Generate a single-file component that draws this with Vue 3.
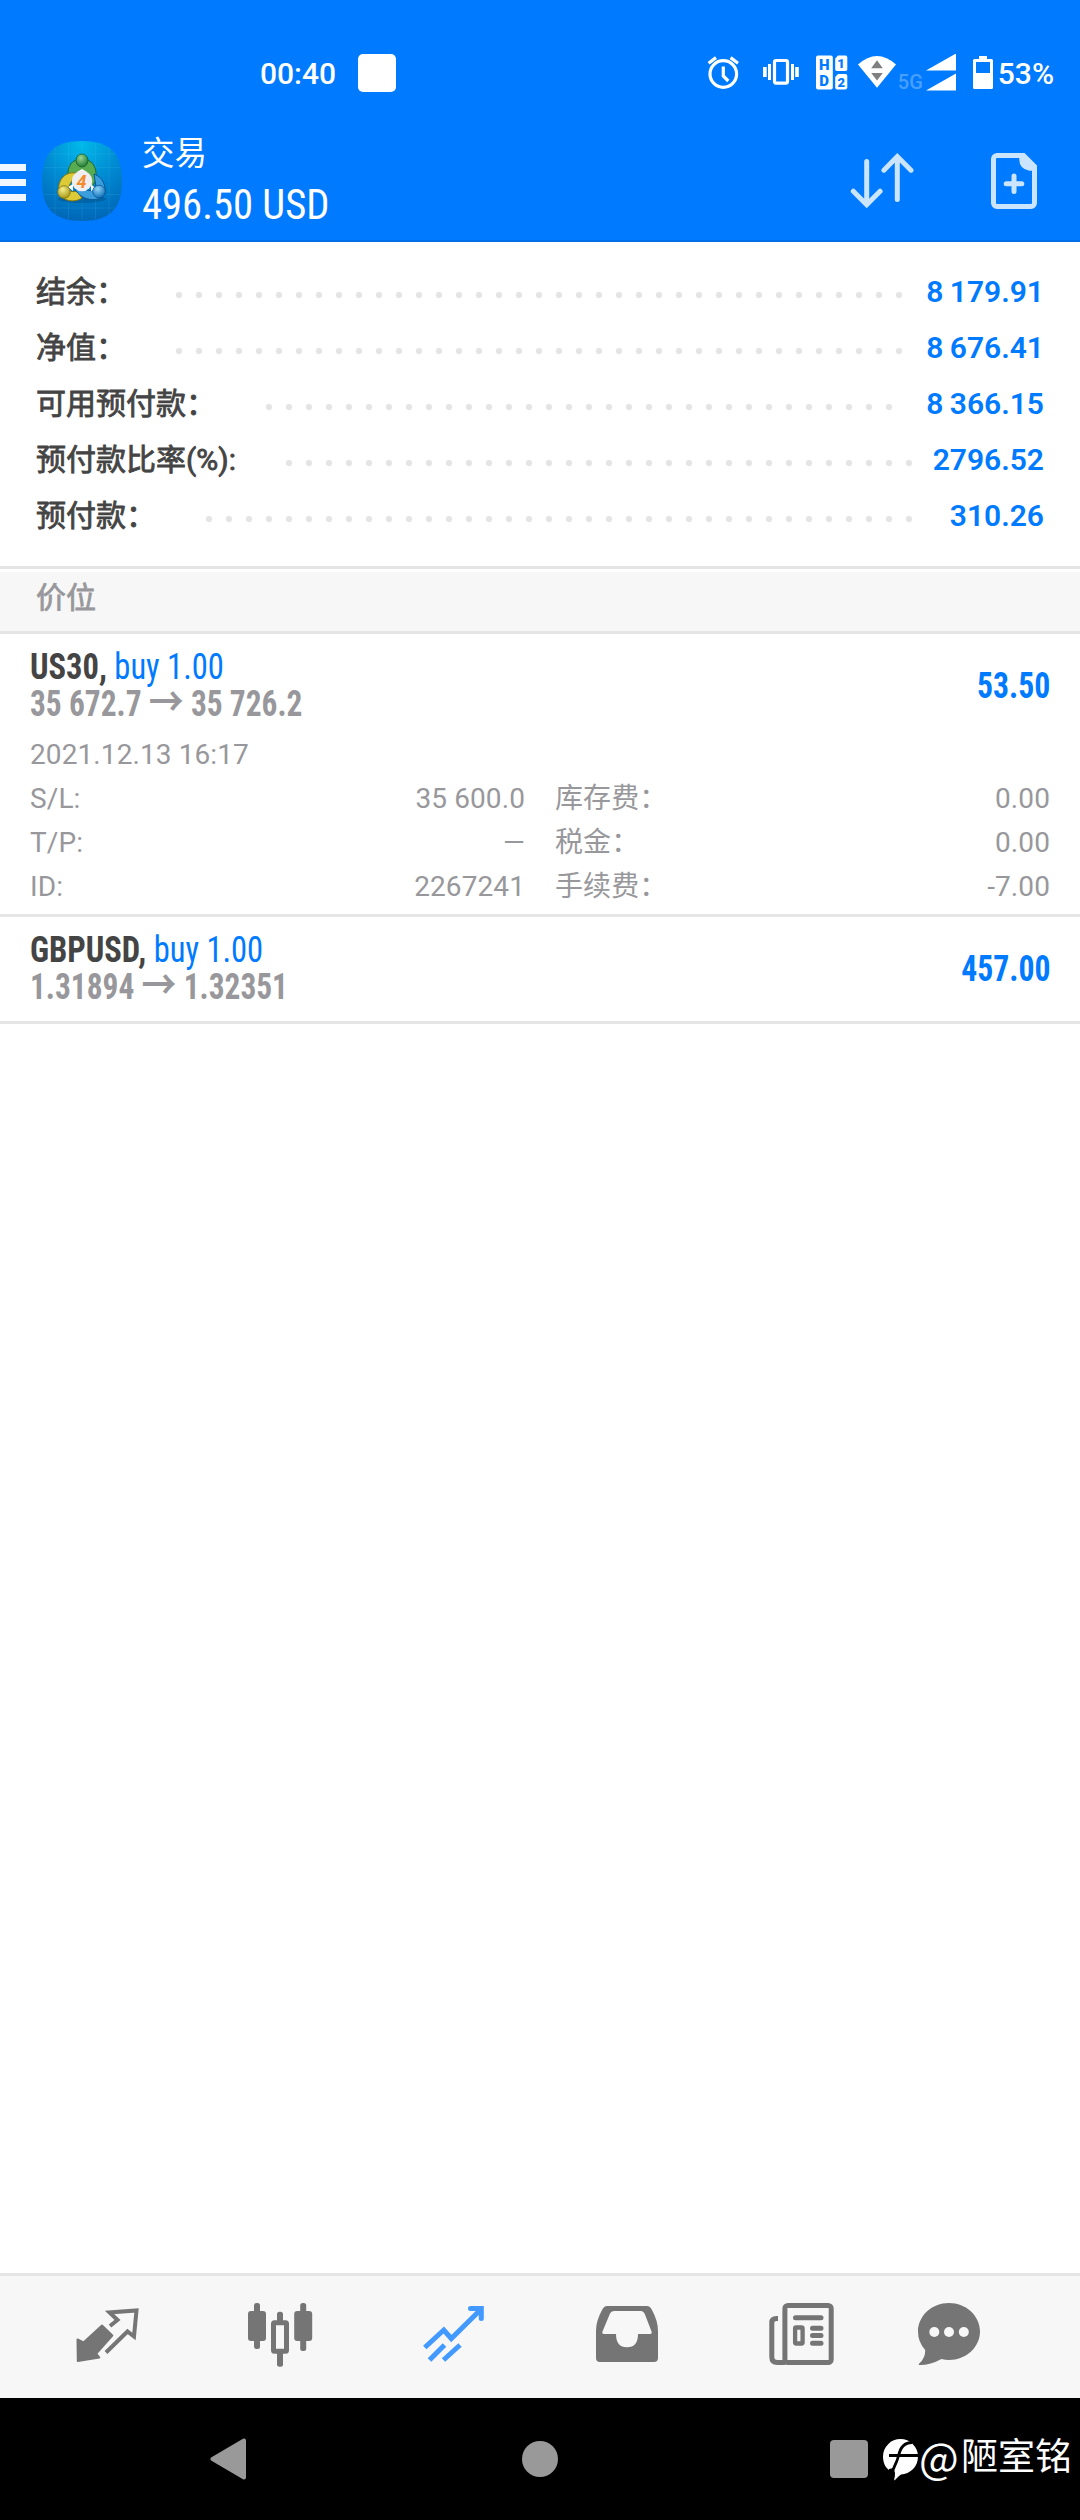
<script setup>
const summary = [
  { label: '结余：', value: '8 179.91', dots: 37 },
  { label: '净值：', value: '8 676.41', dots: 37 },
  { label: '可用预付款：', value: '8 366.15', dots: 32 },
  { label: '预付款比率(%):', value: '2796.52', dots: 32 },
  { label: '预付款：', value: '310.26', dots: 36 }
]

const positions = [
  {
    symbol: 'US30',
    side: 'buy 1.00',
    open: '35 672.7',
    current: '35 726.2',
    profit: '53.50',
    time: '2021.12.13 16:17',
    details: [
      ['S/L:', '35 600.0', '库存费：', '0.00'],
      ['T/P:', '—', '税金：', '0.00'],
      ['ID:', '2267241', '手续费：', '-7.00']
    ]
  },
  {
    symbol: 'GBPUSD',
    side: 'buy 1.00',
    open: '1.31894',
    current: '1.32351',
    profit: '457.00'
  }
]
</script>

<template>
  <div class="screen">
    <header class="header">
      <div class="status">
        <span class="clock">00:40</span>
        <span class="notice"></span>
        <div class="status-icons">
          <svg class="alarm" width="34" height="40" viewBox="706 54 34 40" fill="none" stroke="#fff" stroke-width="3.2">
            <circle cx="723.3" cy="74" r="13.3" />
            <path d="M723.3 66.5V76l5 5M708.6 63.2l7.4-5.6M738 63.2l-7.4-5.6" />
          </svg>
          <svg class="vibrate" width="36" height="40" viewBox="763 54 36 40" fill="#fff">
            <rect x="774.5" y="60.5" width="13" height="22.6" rx="1.5" fill="none" stroke="#fff" stroke-width="3.2" />
            <path d="M763 67h3.7v10H763zM768 64h3v16h-3zM791 64h3v16h-3zM795.2 67h3.6v10h-3.6z" />
          </svg>
          <svg class="hd" width="32" height="40" viewBox="816 54 32 40" fill="#fff">
            <rect x="816" y="55.6" width="16.8" height="33.8" rx="2" />
            <path d="M838 55.6h7.5a1.8 1.8 0 0 1 1.8 1.8v11.8a1.8 1.8 0 0 1-1.8 1.8h-8.5a1.8 1.8 0 0 1-1.8-1.8V58.5z" />
            <path d="M838 74h7.5a1.8 1.8 0 0 1 1.8 1.8v11.8a1.8 1.8 0 0 1-1.8 1.8h-8.5a1.8 1.8 0 0 1-1.8-1.8V77z" />
            <text class="hd-text" x="824.2" y="69.8" font-size="15">H</text>
            <text class="hd-text" x="824.2" y="86.3" font-size="15">D</text>
            <text class="hd-text" x="841" y="68" font-size="13">1</text>
            <text class="hd-text" x="841.2" y="86.5" font-size="13">2</text>
          </svg>
          <svg class="wifi" width="40" height="40" viewBox="857 54 40 40">
            <path d="M858 64.5Q877 47.5 896 64.5L877 87.8z" fill="#fff" />
            <path d="M877 60.3l5.8 8h-11.6zM877 80.5l5.8-7.5h-11.6z" fill="#808080" />
          </svg>
          <span class="network">5G</span>
          <svg class="signal" width="30" height="40" viewBox="926 54 30 40" fill="#fff">
            <path d="M926 70.4L956 53.5v16.9zM926 90.5l30-16.9v16.9z" />
          </svg>
          <svg class="battery" width="20" height="40" viewBox="973 54 20 40">
            <path fill="#fff" fill-rule="evenodd" d="M979 56h8v3h4.5a1.5 1.5 0 0 1 1.5 1.5v27a1.5 1.5 0 0 1-1.5 1.5h-17a1.5 1.5 0 0 1-1.5-1.5v-27a1.5 1.5 0 0 1 1.5-1.5h4.5zM976 62v11h14V62z" />
          </svg>
          <span class="percent">53%</span>
        </div>
      </div>

      <div class="appbar">
        <div class="menu"><i></i><i></i><i></i></div>
        <svg class="logo" width="82" height="82" viewBox="0 0 82 82">
          <defs>
            <radialGradient id="bg" cx=".5" cy=".05" r="1">
              <stop offset="0" stop-color="#00b9ea" />
              <stop offset=".5" stop-color="#0088d0" />
              <stop offset="1" stop-color="#0063b4" />
            </radialGradient>
            <radialGradient id="green" cx=".4" cy=".3" r=".7">
              <stop offset="0" stop-color="#9bd58f" />
              <stop offset="1" stop-color="#1f7d35" />
            </radialGradient>
            <radialGradient id="yellow" cx=".4" cy=".3" r=".7">
              <stop offset="0" stop-color="#f5ee8c" />
              <stop offset="1" stop-color="#a99a18" />
            </radialGradient>
            <radialGradient id="blue" cx=".4" cy=".3" r=".7">
              <stop offset="0" stop-color="#8fd2f5" />
              <stop offset="1" stop-color="#1273bb" />
            </radialGradient>
          </defs>
          <path d="M41 1C69 1 81 13 81 41S69 81 41 81 1 69 1 41 13 1 41 1z" fill="url(#bg)" />
          <path d="M14 7v68M27.5 3v76M41 2v78M54.5 3v76M68 7v68M7 14h68M3 27.5h76M3 54.5h76M7 68h68" stroke="#5cc8f5" stroke-opacity=".14" />
          <ellipse cx="41" cy="59" rx="24" ry="4" fill="#00406f" opacity=".35" />
          <path d="M27 37c-1-11 4-18 14-18s15 8 14 18c0 4-2 7-4 9l-7-5c2-9-5-12-8-7z" fill="#57ab50" stroke="#1b6a30" />
          <path d="M35 33c-13-2-19 10-17 19 2 8 14 12 23 6l-5-7c-6 2-10-1-8-5z" fill="#dccb36" stroke="#80720f" />
          <path d="M53 34c9 3 12 12 11 20-6 9-24 7-30-5l8-3c4 7 11 5 13 1z" fill="#3a9edd" stroke="#0c5795" />
          <path d="M36 32l5-3 5 3zM27 47l5-3v7zM50 44l5 5-5 2z" fill="#fff" />
          <ellipse cx="41" cy="20.5" rx="6" ry="6.5" fill="url(#green)" stroke="#17602a" stroke-width=".8" />
          <circle cx="23" cy="52" r="6.3" fill="url(#yellow)" stroke="#80720f" stroke-width=".8" />
          <circle cx="58" cy="51.5" r="6.3" fill="url(#blue)" stroke="#0c5795" stroke-width=".8" />
          <circle cx="41" cy="41" r="10.3" fill="#eeeef0" />
          <text class="logo-four" x="40.5" y="47.5">4</text>
        </svg>
        <div class="title">
          <span class="title-name">交易</span>
          <span class="title-sum condensed">496.50 USD</span>
        </div>
        <svg class="sort" width="64" height="58" viewBox="850 152 64 58" fill="none" stroke="#cce5ff" stroke-width="5" stroke-linecap="round">
          <path d="M866.7 161.5V204M853.3 191.2l13.4 13.6 13.4-13.6M897.3 199.5V158M883.9 170.2l13.4-13.6 13.7 13.6" />
        </svg>
        <svg class="new-order" width="46" height="58" viewBox="991 152 46 58">
          <path d="M996 155.5h27.5l11 11V203a3.5 3.5 0 0 1-3.5 3.5h-34a3.5 3.5 0 0 1-3.5-3.5V159a3.5 3.5 0 0 1 3.5-3.5z" fill="none" stroke="#cce5ff" stroke-width="5" />
          <path d="M1019.3 155h6l11.5 11v4.7h-7.5q-10-2-10-11z" fill="#cce5ff" />
          <path d="M1014 176v15.5M1006.2 183.7h15.6" stroke="#cce5ff" stroke-width="5" stroke-linecap="round" />
        </svg>
      </div>
    </header>

    <section class="summary">
      <div v-for="row in summary" :key="row.label" class="summary-row">
        <span class="summary-label">{{ row.label }}</span>
        <span class="summary-dots" :style="{ width: row.dots * 20 + 'px' }"></span>
        <span class="summary-value">{{ row.value }}</span>
      </div>
    </section>

    <h2 class="section-title">价位</h2>

    <main class="positions">
      <article v-for="item in positions" :key="item.symbol" class="position">
        <div class="position-head">
          <div class="position-info condensed">
            <div class="order"><b>{{ item.symbol }},</b> <span class="side">{{ item.side }}</span></div>
            <div class="prices">{{ item.open }} <span class="arrow">→</span> {{ item.current }}</div>
          </div>
          <div class="profit condensed">{{ item.profit }}</div>
        </div>
        <div v-if="item.details" class="details">
          <div class="time">{{ item.time }}</div>
          <div v-for="line in item.details" :key="line[0]" class="detail-row">
            <span>{{ line[0] }}</span>
            <span class="num">{{ line[1] }}</span>
            <span class="cn">{{ line[2] }}</span>
            <span class="num">{{ line[3] }}</span>
          </div>
        </div>
      </article>
    </main>

    <nav class="tabs">
      <svg width="64" height="60" viewBox="75 2302 64 60" class="tab-quotes">
        <path d="M77.5 2339.5l6 3L102 2325.5l10.300 10-16 18 3 4-21.500 3.500z" fill="#757575" stroke="#757575" stroke-width="2" stroke-linejoin="round" />
        <path d="M110 2326l7.5-6-8-7.5 27-2-2.5 26-6.5-5-21.5 21" fill="none" stroke="#757575" stroke-width="4" />
      </svg>
      <svg width="66" height="66" viewBox="247 2302 66 66" class="tab-chart" fill="#757575">
        <rect x="254" y="2303" width="6" height="46" rx="2.5" />
        <rect x="248" y="2311" width="18" height="30" rx="3" />
        <rect x="277" y="2311.7" width="6" height="12" rx="2.5" />
        <rect x="277" y="2350" width="6" height="16.8" rx="2.5" />
        <rect x="273.5" y="2322.7" width="13" height="28.5" rx="1" fill="none" stroke="#757575" stroke-width="5" />
        <rect x="300.2" y="2303" width="6" height="48" rx="2.5" />
        <rect x="294.2" y="2311" width="18" height="30" rx="3" />
      </svg>
      <svg width="64" height="60" viewBox="421 2304 64 60" class="tab-trade" fill="none" stroke="#4299ff" stroke-width="5">
        <path d="M424.8 2347.5l19-17.5 7.5 8.5 30-29.5M429.5 2360l15-15M443.5 2360l16.500-15" />
        <path d="M470.5 2308.5h10.8v10" stroke-linecap="round" />
      </svg>
      <svg width="64" height="60" viewBox="595 2304 64 60" class="tab-history">
        <path fill="#757575" fill-rule="evenodd" d="M609 2306h38q3 0 5 4 6 11 6 21v27a4 4 0 0 1-4 4h-54a4 4 0 0 1-4-4v-27q0-10 6-21 2-4 5-4zM614 2311q-3 0-4 2.5l-7.5 18q-.8 2.5 1.5 2.5h12q0 13.3 11 13.3t11-13.3h12q2.3 0 1.5-2.5l-6.5-17q-1.500-3.500-4-3.500z" />
      </svg>
      <svg width="66" height="66" viewBox="769 2301 66 66" class="tab-news" fill="none" stroke="#757575" stroke-width="5">
        <rect x="784.9" y="2305.5" width="46.3" height="57" rx="3" />
        <path d="M778 2318.5h-1.5q-4.7 0-4.7 4V2357q0 5.5 5.5 5.5h8" />
        <path d="M795.5 2317.7H821M812.5 2328.2h8.500M812.5 2335.5h8.500M812.5 2343.2h8.500" stroke-linecap="round" />
        <rect x="795.1" y="2327.5" width="7.5" height="16" rx="1" stroke-width="4.3" />
      </svg>
      <svg width="64" height="66" viewBox="917 2301 64 66" class="tab-chat">
        <path d="M949 2303c17 0 31 12.7 31 28.5s-14 28.5-31 28.5q-4 0-7.5-1-11 6-21.5 6-2 0-.8-1.5 6.3-5.5 6-13.5-7.2-8-7.2-18.5c0-15.800 14-28.500 31-28.500z" fill="#757575" />
        <g fill="#f7f7f7">
          <circle cx="934.3" cy="2332" r="5" />
          <circle cx="949" cy="2332" r="5" />
          <circle cx="963.8" cy="2332" r="5" />
        </g>
      </svg>
    </nav>

    <footer class="sysnav">
      <svg class="back" width="37" height="42" viewBox="0 0 37 42">
        <path d="M2.5 21L34 2.5v37z" fill="#999" stroke="#999" stroke-width="4" stroke-linejoin="round" />
      </svg>
      <span class="home"></span>
      <span class="recent"></span>
      <div class="watermark">
        <svg width="36" height="42" viewBox="0 0 36 42">
          <path d="M17.5 0A17.5 17.5 0 0 1 35 17.5C35 28 27 35 18 35.5q-2.5 1.5-6.5 6V34Q0 30 0 17.5A17.5 17.5 0 0 1 17.500 0z" fill="#fff" />
          <path d="M29 3.500c-7 0-11.500 3.500-13.500 13.500-2 8-5.500 12-6 16M6 16.500h30" fill="none" stroke="#000" stroke-width="2.800" />
          <path d="M6 30l4.500-1 1.500 5-.8 8H6z" fill="#000" />
          <path d="M16.500 19L11 41.500l8-8V19z" fill="#fff" />
        </svg>
        <span class="at">@</span><span>陋室铭</span>
      </div>
    </footer>
  </div>
</template>

<style>
body {
  margin: 0;
}
</style>

<style scoped>
.screen {
  width: 1080px;
  height: 2520px;
  display: flex;
  flex-direction: column;
  background: #fff;
  overflow: hidden;
  font-family: Roboto, "Noto Sans CJK SC", sans-serif;
}

svg {
  display: block;
  flex: none;
}

.condensed {
  font-family: "Roboto Condensed", Roboto, "Noto Sans CJK SC", sans-serif;
  font-stretch: 75%;
}

.header {
  height: 240px;
  flex: none;
  background: #007aff;
  border-bottom: 2px solid #006ee6;
  color: #fff;
}

.status {
  height: 68px;
  padding: 40px 26px 0 260px;
  display: flex;
  align-items: center;
  font-size: 30px;
  font-weight: 500;
  line-height: 40px;
}

.notice {
  width: 38px;
  height: 38px;
  margin: -2px 0 0 22px;
  border-radius: 5px;
  background: #fff;
}

.status-icons {
  margin-left: auto;
  display: flex;
  align-items: center;
}

.vibrate {
  margin-left: 23px;
}

.hd {
  margin-left: 17px;
}

.hd-text {
  fill: #007aff;
  font-weight: 900;
  text-anchor: middle;
}

.wifi {
  margin-left: 9px;
}

.network {
  width: 27px;
  margin: 16px 0 0 1px;
  font-size: 20px;
  line-height: 20px;
  color: rgba(255, 255, 255, 0.3);
}

.signal {
  margin-left: 1px;
}

.battery {
  margin-left: 17px;
}

.percent {
  margin-left: 5px;
}

.appbar {
  height: 134px;
  display: flex;
  align-items: flex-start;
}

.menu {
  width: 26px;
  padding-top: 56px;
  display: flex;
  flex-direction: column;
  gap: 8px;
}

.menu i {
  height: 7px;
  background: #f0f7ff;
}

.logo {
  margin: 32px 0 0 15px;
}

.logo-four {
  fill: #f58a2c;
  font-size: 18px;
  font-weight: 700;
  font-style: italic;
  text-anchor: middle;
}

.title {
  margin: 23px auto 0 19px;
  display: flex;
  flex-direction: column;
  white-space: nowrap;
}

.title-name {
  font-size: 32.5px;
  line-height: 46px;
}

.title-sum {
  font-size: 43px;
  line-height: 52px;
  margin-top: 1px;
  transform: scaleX(0.945);
  transform-origin: left;
}

.sort {
  margin-top: 44px;
}

.new-order {
  margin: 44px 43px 0 77px;
}

.summary {
  padding: 22px 36px 22px;
  border-bottom: 3px solid #e5e5e5;
}

.summary-row {
  height: 56px;
  display: flex;
  align-items: center;
  font-size: 30px;
  font-weight: 500;
  line-height: 56px;
  color: #444;
}

.summary-label,
.section-title {
  -webkit-text-stroke: 0.8px currentColor;
}

.summary-label {
  font-weight: 400;
}

.summary-dots {
  height: 8px;
  margin: 6px 0 0 43px;
  background: radial-gradient(circle at 10px 4px, #e5e5e5 2.8px, transparent 3.6px) 0 0 / 20px 8px;
}

.summary-value {
  margin-left: auto;
  font-weight: 600;
  color: #007aff;
  word-spacing: -1px;
}

.section-title {
  height: 59px;
  margin: 3px 0 0;
  padding-left: 36px;
  border-bottom: 3px solid #e5e5e5;
  background: #f7f7f7;
  font-size: 30px;
  font-weight: 400;
  line-height: 51px;
  color: #98989c;
}

.positions {
  flex: 1;
}

.position {
  padding: 0 30px;
  border-bottom: 3px solid #e5e5e5;
}

.position-head {
  height: 104px;
  display: flex;
  justify-content: space-between;
  align-items: center;
  font-size: 36px;
  line-height: 37px;
  color: #444;
}

.position-info {
  white-space: nowrap;
}

.order {
  transform: scaleX(0.903);
  transform-origin: left;
}

.side,
.profit {
  color: #007aff;
}

.profit {
  padding-top: 1px;
  font-weight: 700;
  transform: scaleX(0.88);
  transform-origin: right;
}

.prices {
  font-weight: 700;
  color: #98989c;
  transform: scaleX(0.872);
  transform-origin: left;
}

.arrow {
  display: inline-block;
  font-size: 40px;
  line-height: 30px;
}

.details {
  height: 181px;
  margin-top: -6px;
  padding-top: 1px;
  font-size: 28px;
  line-height: 44px;
  letter-spacing: 0.1px;
  color: #98989c;
}

.detail-row {
  display: grid;
  grid-template-columns: 1fr 1fr 1fr 1fr;
}

.num {
  text-align: right;
}

.num:nth-child(2) {
  padding-right: 15px;
}

.cn {
  padding-left: 15px;
}

.tabs {
  height: 122px;
  flex: none;
  border-top: 3px solid #e5e5e5;
  background: #f7f7f7;
  display: flex;
  align-items: flex-start;
}

.tab-quotes {
  margin: 26px 0 0 75px;
}

.tab-chart {
  margin: 26px 0 0 108px;
}

.tab-trade {
  margin: 28px 0 0 108px;
}

.tab-history {
  margin: 28px 0 0 110px;
}

.tab-news {
  margin: 25px 0 0 110px;
}

.tab-chat {
  margin: 25px 0 0 82px;
}

.sysnav {
  height: 122px;
  flex: none;
  display: flex;
  align-items: center;
  background: #000;
}

.back {
  margin-left: 210px;
}

.home {
  width: 36px;
  height: 36px;
  margin-left: 275px;
  border-radius: 50%;
  background: #999;
}

.recent {
  width: 38px;
  height: 38px;
  margin-left: 272px;
  border-radius: 4px;
  background: #999;
}

.watermark {
  margin-left: 15px;
  display: flex;
  align-items: center;
  color: #fff;
  font-size: 37px;
  line-height: 48px;
  margin-bottom: 3px;
  white-space: nowrap;
}

.watermark svg {
  margin-top: 4px;
}

.at {
  width: 42px;
  margin-top: -3px;
  font-family: "Noto Sans CJK SC", sans-serif;
  font-size: 42px;
}
</style>
